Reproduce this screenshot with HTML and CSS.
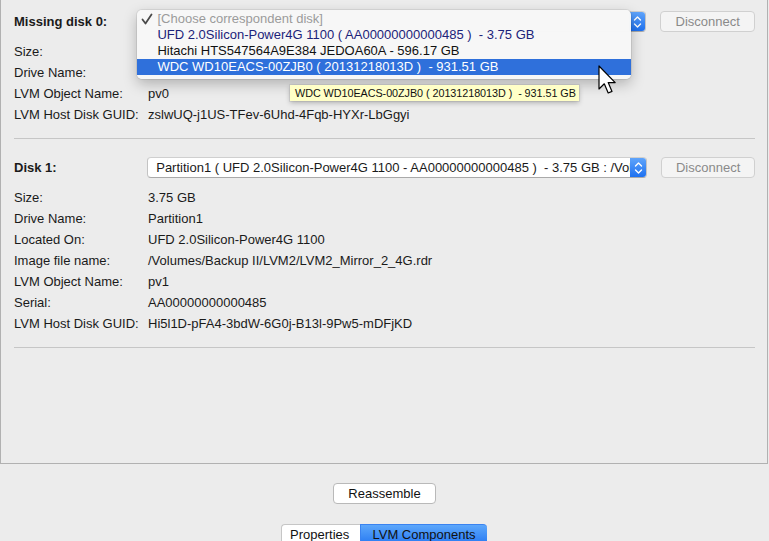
FILE: index.html
```html
<!DOCTYPE html>
<html>
<head>
<meta charset="utf-8">
<link rel="stylesheet" href="styles.css">
</head>
<body>
<div class="panel">
  <section class="disk first">
    <div class="head">
      <div class="head-label">Missing disk 0:</div>
      <div class="popup-wrap">
        <div class="popup">
          <span class="popup-text"></span>
          <span class="stepper"><svg width="9" height="14" viewBox="0 0 9 14"><path d="M1.5 5 L4.5 2 L7.5 5 M1.5 9 L4.5 12 L7.5 9" fill="none" stroke="#fff" stroke-width="1.4" stroke-linecap="round" stroke-linejoin="round"/></svg></span>
        </div>
        <div class="menu">
          <div class="item muted"><svg class="check" width="12" height="12" viewBox="0 0 12 12"><path d="M1.5 6.5 L4.5 10.5 L10.5 1.5" fill="none" stroke="#4a4a4a" stroke-width="1.8" stroke-linecap="round" stroke-linejoin="round"/></svg>[Choose correspondent disk]</div>
          <div class="item navy">UFD 2.0Silicon-Power4G 1100 ( AA00000000000485 )&nbsp; - 3.75 GB</div>
          <div class="item">Hitachi HTS547564A9E384 JEDOA60A - 596.17 GB</div>
          <div class="item selected">WDC WD10EACS-00ZJB0 ( 20131218013D )&nbsp; - 931.51 GB</div>
        </div>
      </div>
      <button class="btn-disc">Disconnect</button>
    </div>
    <div class="rows">
      <div class="lbl">Size:</div><div class="val"></div>
      <div class="lbl">Drive Name:</div><div class="val"></div>
      <div class="lbl">LVM Object Name:</div><div class="val">pv0</div>
      <div class="lbl">LVM Host Disk GUID:</div><div class="val">zslwUQ-j1US-TFev-6Uhd-4Fqb-HYXr-LbGgyi</div>
    </div>
    <div class="tooltip">WDC WD10EACS-00ZJB0 ( 20131218013D )&nbsp; - 931.51 GB</div>
    <svg class="cursor" width="20" height="32" viewBox="0 0 20 32"><path d="M1 1 L1 24 L6.3 18.8 L10.2 28 L14 26.4 L10.2 17.6 L17.2 17.6 Z" fill="#fff" stroke="#000" stroke-width="1.2" stroke-linejoin="round"/></svg>
  </section>
  <hr class="sep">
  <section class="disk">
    <div class="head">
      <div class="head-label">Disk 1:</div>
      <div class="popup-wrap">
        <div class="popup">
          <span class="popup-text">Partition1 ( UFD 2.0Silicon-Power4G 1100 - AA00000000000485 )&nbsp; - 3.75 GB : /Volumes/Backup II/LVM2/LVM2_Mirror_2_4G.rdr</span>
          <span class="stepper"><svg width="9" height="14" viewBox="0 0 9 14"><path d="M1.5 5 L4.5 2 L7.5 5 M1.5 9 L4.5 12 L7.5 9" fill="none" stroke="#fff" stroke-width="1.4" stroke-linecap="round" stroke-linejoin="round"/></svg></span>
        </div>
      </div>
      <button class="btn-disc">Disconnect</button>
    </div>
    <div class="rows">
      <div class="lbl">Size:</div><div class="val">3.75 GB</div>
      <div class="lbl">Drive Name:</div><div class="val">Partition1</div>
      <div class="lbl">Located On:</div><div class="val">UFD 2.0Silicon-Power4G 1100</div>
      <div class="lbl">Image file name:</div><div class="val">/Volumes/Backup II/LVM2/LVM2_Mirror_2_4G.rdr</div>
      <div class="lbl">LVM Object Name:</div><div class="val">pv1</div>
      <div class="lbl">Serial:</div><div class="val">AA00000000000485</div>
      <div class="lbl">LVM Host Disk GUID:</div><div class="val">Hi5l1D-pFA4-3bdW-6G0j-B13l-9Pw5-mDFjKD</div>
    </div>
  </section>
  <hr class="sep">
</div>
<div class="footer">
  <button class="btn-main">Reassemble</button>
  <div class="tabs">
    <div class="tab">Properties</div>
    <div class="tab active">LVM Components</div>
  </div>
</div>
</body>
</html>
```
FILE: styles.css
```css
html, body {
  margin: 0;
  padding: 0;
  background: #ececec;
  font-family: "Liberation Sans", Arial, sans-serif;
  font-size: 13px;
  color: #1a1a1a;
  overflow: hidden;
}
.panel {
  width: 766px;
  height: 463px;
  border: 1px solid #b1b1b1;
  border-top: none;
  box-sizing: content-box;
}
.disk {
  position: relative;
  padding: 11px 12px 0 13px;
}
.head {
  display: flex;
  align-items: center;
  height: 21px;
}
.head-label {
  width: 135px;
  font-weight: bold;
}
.popup-wrap {
  position: relative;
  width: 500px;
  height: 21px;
}
.popup {
  display: flex;
  height: 21px;
  box-sizing: border-box;
  background: #fff;
  border: 1px solid #c3c3c3;
  border-top-color: #cfcfcf;
  border-bottom-color: #a9a9a9;
  border-radius: 4px;
  overflow: hidden;
}
.popup-text {
  flex: 1;
  padding-left: 8px;
  line-height: 19px;
  white-space: nowrap;
  overflow: hidden;
}
.stepper {
  width: 17px;
  flex: none;
  margin: -1px -1px -1px 0;
  background: linear-gradient(#63a7fb, #1a6ef0);
  border-radius: 0 4px 4px 0;
  display: flex;
  align-items: center;
  justify-content: center;
}
.btn-disc {
  margin-left: 14px;
  width: 95px;
  height: 21px;
  padding: 0;
  background: #f4f4f4;
  border: 1px solid #d0d0d0;
  border-radius: 4px;
  font-family: inherit;
  font-size: 13px;
  color: #8a8a8a;
}
.rows {
  display: grid;
  grid-template-columns: 134px 1fr;
  grid-auto-rows: 21px;
  line-height: 21px;
  margin-top: 9px;
}
.val { white-space: nowrap; }
.sep {
  margin: 13px 12px 0 13px;
  border: none;
  border-top: 1px solid #c6c6c6;
  height: 0;
}
.sep + .disk { padding-top: 18px; }
.menu {
  position: absolute;
  left: -11px;
  top: -1px;
  width: 494px;
  padding: 1px 0 4px;
  background: rgba(247, 247, 247, 0.99);
  border-radius: 5px;
  box-shadow: 0 0 0 1px rgba(0,0,0,0.07), 0 5px 14px rgba(0,0,0,0.25);
  z-index: 5;
}
.item {
  position: relative;
  height: 16px;
  line-height: 16px;
  padding-left: 20px;
  white-space: nowrap;
  color: #111;
}
.item.muted { color: #9b9b9b; }
.item.navy { color: #1b237a; }
.item.selected {
  background: #2f70db;
  color: #fff;
}
.check {
  position: absolute;
  left: 4px;
  top: 2px;
}
.tooltip {
  position: absolute;
  left: 289px;
  top: 85px;
  height: 16px;
  line-height: 16px;
  padding: 0 3px 0 5px;
  background: #ffffc7;
  font-size: 10.8px;
  letter-spacing: -0.05px;
  color: #111;
  box-shadow: 0 0 0 1px rgba(0,0,0,0.06), 0 2px 5px rgba(0,0,0,0.25);
  white-space: nowrap;
  z-index: 6;
}
.cursor {
  position: absolute;
  left: 597px;
  top: 65px;
  z-index: 7;
}
.footer {
  display: flex;
  flex-direction: column;
  align-items: center;
}
.btn-main {
  margin-top: 19px;
  margin-left: 0;
  width: 103px;
  height: 21px;
  padding: 0;
  background: #fff;
  border: 1px solid #b9b9b9;
  border-radius: 4px;
  font-family: inherit;
  font-size: 13px;
  color: #111;
}
.tabs {
  display: flex;
  margin-top: 20px;
  margin-left: -1px;
  height: 20px;
}
.tab {
  padding: 0 8px;
  line-height: 19px;
  background: #fff;
  border: 1px solid #c6c6c6;
  border-right: none;
  border-radius: 4px 0 0 0;
  color: #111;
  width: 62px;
}
.tab.active {
  width: 110px;
  background: linear-gradient(#5ca7fb, #2a7cf3);
  border-color: #3a83f0;
  border-radius: 0 4px 0 0;
  text-align: center;
}
```
